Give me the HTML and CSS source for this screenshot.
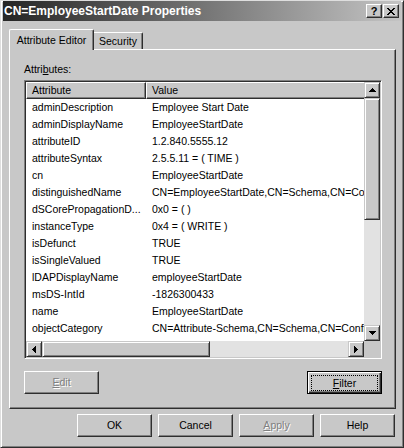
FILE: index.html
```html
<!DOCTYPE html>
<html>
<head>
<meta charset="utf-8">
<title>CN=EmployeeStartDate Properties</title>
<link rel="stylesheet" href="styles.css">
</head>
<body>
<div class="window">
  <div class="titlebar">
    <span class="title">CN=EmployeeStartDate Properties</span>
    <div class="caption-btns">
      <div class="cap-btn help">?</div>
      <div class="cap-btn close">
        <svg width="8" height="7" viewBox="0 0 8 7" shape-rendering="crispEdges"><path d="M0 0h2v1H0zM6 0h2v1H6zM1 1h2v1H1zM5 1h2v1H5zM2 2h4v1H2zM3 3h2v1H3zM2 4h4v1H2zM1 5h2v1H1zM5 5h2v1H5zM0 6h2v1H0zM6 6h2v1H6z"/></svg>
      </div>
    </div>
  </div>
  <div class="client">
    <div class="tabs">
      <div class="tab active">Attribute Editor</div>
      <div class="tab inactive">Security</div>
    </div>
    <div class="panel">
      <div class="label">Attri<u>b</u>utes:</div>
      <div class="listbox">
        <div class="lv-top">
          <div class="lv">
            <div class="lv-header">
              <div class="hcell col1">Attribute</div>
              <div class="hcell col2">Value</div>
            </div>
            <div class="row"><div class="cell col1">adminDescription</div><div class="cell col2">Employee Start Date</div></div>
            <div class="row"><div class="cell col1">adminDisplayName</div><div class="cell col2">EmployeeStartDate</div></div>
            <div class="row"><div class="cell col1">attributeID</div><div class="cell col2">1.2.840.5555.12</div></div>
            <div class="row"><div class="cell col1">attributeSyntax</div><div class="cell col2">2.5.5.11 = ( TIME )</div></div>
            <div class="row"><div class="cell col1">cn</div><div class="cell col2">EmployeeStartDate</div></div>
            <div class="row"><div class="cell col1">distinguishedName</div><div class="cell col2">CN=EmployeeStartDate,CN=Schema,CN=Configuration,DC=contoso,DC=com</div></div>
            <div class="row"><div class="cell col1">dSCorePropagationD...</div><div class="cell col2">0x0 = (  )</div></div>
            <div class="row"><div class="cell col1">instanceType</div><div class="cell col2">0x4 = ( WRITE )</div></div>
            <div class="row"><div class="cell col1">isDefunct</div><div class="cell col2">TRUE</div></div>
            <div class="row"><div class="cell col1">isSingleValued</div><div class="cell col2">TRUE</div></div>
            <div class="row"><div class="cell col1">lDAPDisplayName</div><div class="cell col2">employeeStartDate</div></div>
            <div class="row"><div class="cell col1">msDS-IntId</div><div class="cell col2">-1826300433</div></div>
            <div class="row"><div class="cell col1">name</div><div class="cell col2">EmployeeStartDate</div></div>
            <div class="row"><div class="cell col1">objectCategory</div><div class="cell col2">CN=Attribute-Schema,CN=Schema,CN=Configuration,DC=contoso,DC=com</div></div>
            <div class="row"><div class="cell col1">objectClass</div><div class="cell col2">top;attributeSchema</div></div>
          </div>
          <div class="vscroll">
            <div class="sb-btn"><svg width="7" height="4" viewBox="0 0 7 4" shape-rendering="crispEdges"><path d="M3 0h1v1H3zM2 1h3v1H2zM1 2h5v1H1zM0 3h7v1H0z"/></svg></div>
            <div class="sb-thumb vthumb"></div>
            <div class="sb-track"></div>
            <div class="sb-btn"><svg width="7" height="4" viewBox="0 0 7 4" shape-rendering="crispEdges"><path d="M0 0h7v1H0zM1 1h5v1H1zM2 2h3v1H2zM3 3h1v1H3z"/></svg></div>
          </div>
        </div>
        <div class="lv-bottom">
          <div class="hscroll">
            <div class="sb-btn"><svg width="4" height="7" viewBox="0 0 4 7" shape-rendering="crispEdges"><path d="M0 3h1v1H0zM1 2h1v3H1zM2 1h1v5H2zM3 0h1v7H3z"/></svg></div>
            <div class="sb-thumb hthumb"></div>
            <div class="sb-track"></div>
            <div class="sb-btn"><svg width="4" height="7" viewBox="0 0 4 7" shape-rendering="crispEdges"><path d="M0 0h1v7H0zM1 1h1v5H1zM2 2h1v3H2zM3 3h1v1H3z"/></svg></div>
          </div>
          <div class="sb-corner"></div>
        </div>
      </div>
      <div class="panel-btns">
        <button class="btn disabled"><u>E</u>dit</button>
        <button class="btn default"><span class="focus"><u>F</u>ilter</span></button>
      </div>
    </div>
    <div class="dlg-btns">
      <button class="btn">OK</button>
      <button class="btn">Cancel</button>
      <button class="btn disabled"><u>A</u>pply</button>
      <button class="btn">Help</button>
    </div>
  </div>
</div>
</body>
</html>
```

FILE: styles.css
```css
* { box-sizing: border-box; }

html, body {
  margin: 0;
  padding: 0;
  background: #c8c8c8;
}

body {
  font-family: "Liberation Sans", Arial, sans-serif;
  font-size: 10.5px;
  color: #000;
}

.window {
  width: 404px;
  height: 448px;
  background: #c8c8c8;
  border: 1px solid;
  border-color: #dedede #2e2e2e #2e2e2e #dedede;
  box-shadow: inset 1px 1px #fff, inset -1px -1px #808080;
  padding: 0 2px 2px 2px;
  display: flex;
  flex-direction: column;
}

/* ---------- title bar ---------- */
.titlebar {
  height: 20px;
  flex: none;
  display: flex;
  align-items: center;
  justify-content: space-between;
  background: linear-gradient(to right, #252525, #c4c4c4);
  padding: 0 2px 0 1px;
}

.title {
  color: #fff;
  font-weight: bold;
  font-size: 12px;
  white-space: nowrap;
}

.caption-btns {
  display: flex;
  gap: 1px;
}

.cap-btn {
  width: 16px;
  height: 14px;
  background: #c8c8c8;
  border: 1px solid;
  border-color: #fff #2e2e2e #2e2e2e #fff;
  box-shadow: inset -1px -1px #808080;
  display: flex;
  align-items: center;
  justify-content: center;
}

.help {
  font-weight: bold;
  font-size: 11px;
  line-height: 12px;
  padding-bottom: 1px;
}

.close svg { display: block; fill: #000; }

/* ---------- client ---------- */
.client {
  flex: 1;
  padding: 8px 5px 0 6px;
  display: flex;
  flex-direction: column;
}

.tabs {
  display: flex;
  height: 20px;
  align-items: flex-start;
  position: relative;
  z-index: 1;
}

.tab {
  border: 1px solid;
  border-bottom: none;
  border-color: #fff #2e2e2e #fff #fff;
  border-radius: 2px 2px 0 0;
  box-shadow: inset -1px 0 #808080;
  background: #c8c8c8;
  text-align: center;
  white-space: nowrap;
}

.tab.active {
  width: 85px;
  height: 21px;
  line-height: 20px;
}

.tab.inactive {
  width: 49px;
  height: 17px;
  margin-top: 3px;
  line-height: 16px;
  border-left: none;
  border-top-left-radius: 0;
}

.panel {
  height: 360px;
  flex: none;
  border: 1px solid;
  border-color: #fff #2e2e2e #2e2e2e #fff;
  box-shadow: inset -1px -1px #808080;
  padding: 13px 0 0 14px;
}

.label {
  line-height: 13px;
  height: 13px;
}

/* ---------- list view ---------- */
.listbox {
  width: 358px;
  height: 279px;
  margin-top: 4px;
  border: 1px solid;
  border-color: #808080 #fff #fff #808080;
  box-shadow: inset 1px 1px #2e2e2e, inset -1px -1px #c8c8c8;
  padding: 1px;
  background: #fff;
  display: flex;
  flex-direction: column;
}

.lv-top {
  flex: 1;
  display: flex;
  min-height: 0;
}

.lv {
  flex: 1;
  overflow: hidden;
  background: #fff;
  min-width: 0;
}

.lv-header {
  display: flex;
  height: 17px;
  background: #c8c8c8;
}

.hcell {
  height: 17px;
  line-height: 15px;
  border: 1px solid;
  border-color: #fff #2e2e2e #2e2e2e #fff;
  box-shadow: inset -1px -1px #808080;
  padding-left: 5px;
  white-space: nowrap;
  flex: none;
}

.hcell.col1 { width: 120px; }
.hcell.col2 { width: 420px; }

.row {
  display: flex;
  height: 17px;
  line-height: 17px;
  white-space: nowrap;
}

.cell { flex: none; padding-left: 6px; overflow: hidden; }
.cell.col1 { width: 120px; }
.cell.col2 { width: 420px; }

/* ---------- scrollbars ---------- */
.vscroll {
  width: 16px;
  flex: none;
  display: flex;
  flex-direction: column;
}

.lv-bottom {
  height: 16px;
  flex: none;
  display: flex;
}

.hscroll {
  flex: 1;
  display: flex;
}

.sb-btn, .sb-thumb {
  background: #c8c8c8;
  border: 1px solid;
  border-color: #c8c8c8 #2e2e2e #2e2e2e #c8c8c8;
  box-shadow: inset 1px 1px #fff, inset -1px -1px #808080;
  flex: none;
}

.sb-btn {
  width: 16px;
  height: 16px;
  display: flex;
  align-items: center;
  justify-content: center;
}

.sb-btn svg { display: block; fill: #000; }

.vthumb { height: 122px; }
.hthumb { width: 168px; height: 16px; }

.sb-track {
  flex: 1;
  background: #e2e2e2;
}

.sb-corner {
  width: 16px;
  flex: none;
  background: #c8c8c8;
}

/* ---------- buttons ---------- */
.panel-btns {
  width: 358px;
  display: flex;
  justify-content: space-between;
  margin-top: 12px;
}

.dlg-btns {
  display: flex;
  justify-content: flex-end;
  gap: 6px;
  margin-top: 5px;
  padding-right: 1px;
}

.btn {
  width: 75px;
  height: 23px;
  margin: 0;
  padding: 0;
  font: inherit;
  color: #000;
  background: #c8c8c8;
  border: 1px solid;
  border-color: #fff #2e2e2e #2e2e2e #fff;
  border-radius: 0;
  box-shadow: inset -1px -1px #808080;
  display: flex;
  align-items: center;
  justify-content: center;
  line-height: 13px;
}

.btn.disabled {
  color: #808080;
  text-shadow: 1px 1px 0 #fff;
}

.btn.default {
  border-color: #000;
  box-shadow: inset 1px 1px #fff, inset -1px -1px #2e2e2e, inset -2px -2px #808080;
  padding: 3px 3px 2px 3px;
}

.focus {
  width: 100%;
  height: 100%;
  border: 1px dotted #000;
  display: flex;
  align-items: center;
  justify-content: center;
}
```
